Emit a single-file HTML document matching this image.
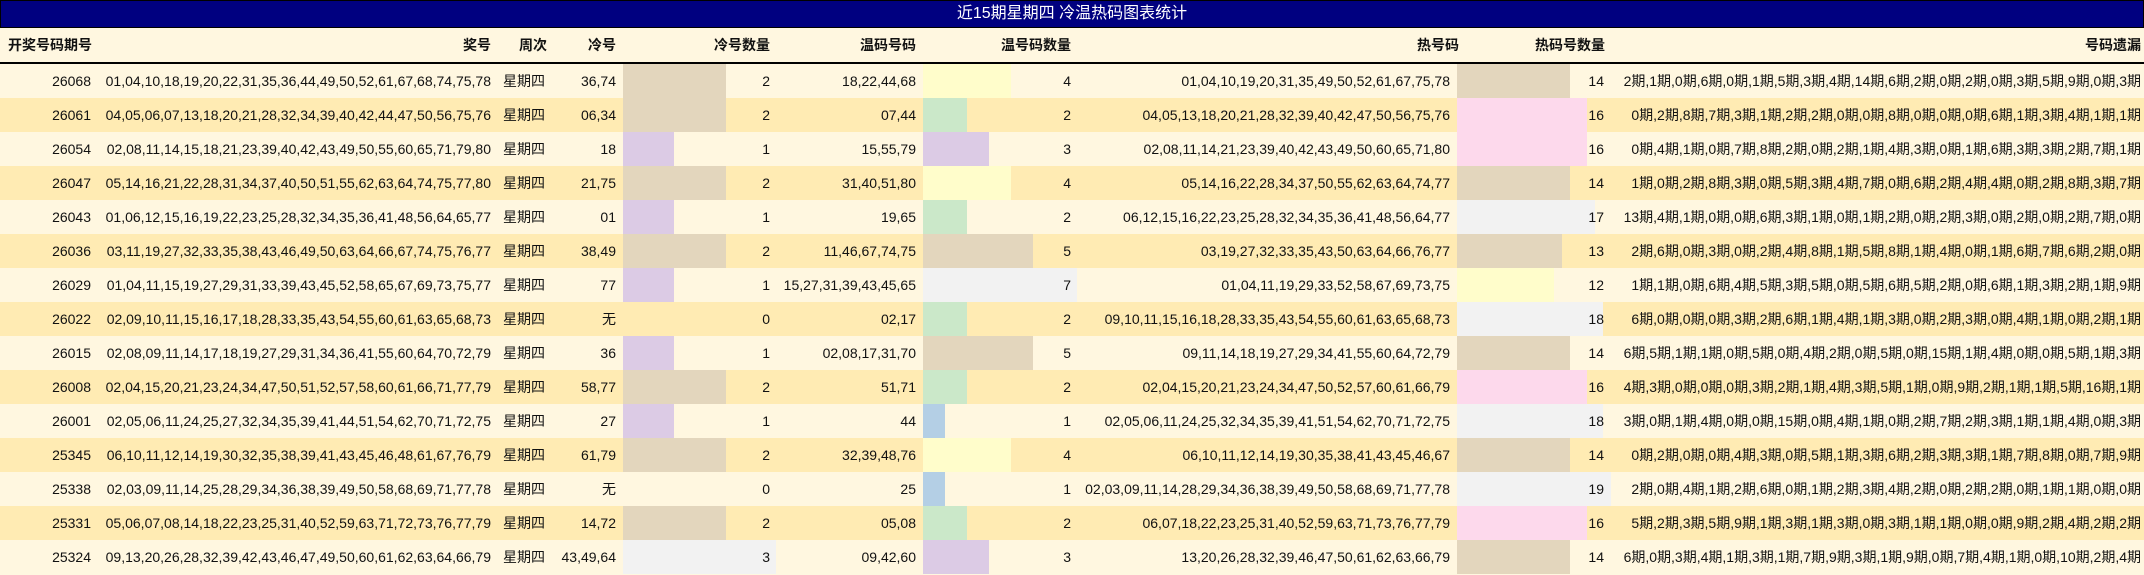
<!DOCTYPE html>
<html><head><meta charset="utf-8"><style>
*{margin:0;padding:0;box-sizing:border-box}
body{width:2144px;height:575px;overflow:hidden;background:#FFF7E0;font-family:"Liberation Sans","Noto Sans CJK SC",sans-serif;font-size:14px;color:#111;position:relative}
#t{position:absolute;left:0;top:0;width:2144px;height:28px;background:#000080;border:1px solid #000;color:#fff;font-size:16px;text-align:center;line-height:26px}
#h{position:absolute;left:0;top:28px;width:2144px;height:36px;background:#FFF7E0;border-bottom:2px solid #000;font-weight:bold}
.r{position:absolute;left:0;width:2144px;height:34px}
.r span,#h span{position:absolute;top:0;line-height:34px;white-space:nowrap}
#h span{line-height:34px}
.r i{position:absolute;top:0;height:34px;display:block}
.o{background:#FFF7E0}.e{background:#FFEBB3}
.T{background:#E3D6BD}.L{background:#DCCBE5}.Y{background:#FFFDCB}.G{background:#CBE8C9}.P{background:#FDD9EC}.S{background:#F2F2F2}.B{background:#B4CFE5}
.a{right:2053px}.b{right:1653px}.c{left:503px}.d{right:1528px}.f{right:1374px}.g{right:1228px}.h{right:1073px}.k{right:694px}.m{right:540px}.n{right:3px}
</style></head><body>
<div id="t">近15期星期四 冷温热码图表统计</div>
<div id="h"><span style="left:8px">开奖号码期号</span><span style="right:1653px">奖号</span><span style="left:519px">周次</span><span style="right:1528px">冷号</span><span style="right:1374px">冷号数量</span><span style="right:1228px">温码号码</span><span style="right:1073px">温号码数量</span><span style="right:685px">热号码</span><span style="right:539px">热码号数量</span><span style="right:3px">号码遗漏</span></div>

<div class="r o" style="top:64px"><i class="T" style="left:623px;width:103px"></i><i class="Y" style="left:923px;width:88px"></i><i class="T" style="left:1457px;width:113px"></i><span class="a">26068</span><span class="b">01,04,10,18,19,20,22,31,35,36,44,49,50,52,61,67,68,74,75,78</span><span class="c">星期四</span><span class="d">36,74</span><span class="f">2</span><span class="g">18,22,44,68</span><span class="h">4</span><span class="k">01,04,10,19,20,31,35,49,50,52,61,67,75,78</span><span class="m">14</span><span class="n">2期,1期,0期,6期,0期,1期,5期,3期,4期,14期,6期,2期,0期,2期,0期,3期,5期,9期,0期,3期</span></div>

<div class="r e" style="top:98px"><i class="T" style="left:623px;width:103px"></i><i class="G" style="left:923px;width:44px"></i><i class="P" style="left:1457px;width:130px"></i><span class="a">26061</span><span class="b">04,05,06,07,13,18,20,21,28,32,34,39,40,42,44,47,50,56,75,76</span><span class="c">星期四</span><span class="d">06,34</span><span class="f">2</span><span class="g">07,44</span><span class="h">2</span><span class="k">04,05,13,18,20,21,28,32,39,40,42,47,50,56,75,76</span><span class="m">16</span><span class="n">0期,2期,8期,7期,3期,1期,2期,2期,0期,0期,8期,0期,0期,0期,6期,1期,3期,4期,1期,1期</span></div>

<div class="r o" style="top:132px"><i class="L" style="left:623px;width:51px"></i><i class="L" style="left:923px;width:66px"></i><i class="P" style="left:1457px;width:130px"></i><span class="a">26054</span><span class="b">02,08,11,14,15,18,21,23,39,40,42,43,49,50,55,60,65,71,79,80</span><span class="c">星期四</span><span class="d">18</span><span class="f">1</span><span class="g">15,55,79</span><span class="h">3</span><span class="k">02,08,11,14,21,23,39,40,42,43,49,50,60,65,71,80</span><span class="m">16</span><span class="n">0期,4期,1期,0期,7期,8期,2期,0期,2期,1期,4期,3期,0期,1期,6期,3期,3期,2期,7期,1期</span></div>

<div class="r e" style="top:166px"><i class="T" style="left:623px;width:103px"></i><i class="Y" style="left:923px;width:88px"></i><i class="T" style="left:1457px;width:113px"></i><span class="a">26047</span><span class="b">05,14,16,21,22,28,31,34,37,40,50,51,55,62,63,64,74,75,77,80</span><span class="c">星期四</span><span class="d">21,75</span><span class="f">2</span><span class="g">31,40,51,80</span><span class="h">4</span><span class="k">05,14,16,22,28,34,37,50,55,62,63,64,74,77</span><span class="m">14</span><span class="n">1期,0期,2期,8期,3期,0期,5期,3期,4期,7期,0期,6期,2期,4期,4期,0期,2期,8期,3期,7期</span></div>

<div class="r o" style="top:200px"><i class="L" style="left:623px;width:51px"></i><i class="G" style="left:923px;width:44px"></i><i class="S" style="left:1457px;width:138px"></i><span class="a">26043</span><span class="b">01,06,12,15,16,19,22,23,25,28,32,34,35,36,41,48,56,64,65,77</span><span class="c">星期四</span><span class="d">01</span><span class="f">1</span><span class="g">19,65</span><span class="h">2</span><span class="k">06,12,15,16,22,23,25,28,32,34,35,36,41,48,56,64,77</span><span class="m">17</span><span class="n">13期,4期,1期,0期,0期,6期,3期,1期,0期,1期,2期,0期,2期,3期,0期,2期,0期,2期,7期,0期</span></div>

<div class="r e" style="top:234px"><i class="T" style="left:623px;width:103px"></i><i class="T" style="left:923px;width:110px"></i><i class="T" style="left:1457px;width:105px"></i><span class="a">26036</span><span class="b">03,11,19,27,32,33,35,38,43,46,49,50,63,64,66,67,74,75,76,77</span><span class="c">星期四</span><span class="d">38,49</span><span class="f">2</span><span class="g">11,46,67,74,75</span><span class="h">5</span><span class="k">03,19,27,32,33,35,43,50,63,64,66,76,77</span><span class="m">13</span><span class="n">2期,6期,0期,3期,0期,2期,4期,8期,1期,5期,8期,1期,4期,0期,1期,6期,7期,6期,2期,0期</span></div>

<div class="r o" style="top:268px"><i class="L" style="left:623px;width:51px"></i><i class="S" style="left:923px;width:154px"></i><i class="Y" style="left:1457px;width:97px"></i><span class="a">26029</span><span class="b">01,04,11,15,19,27,29,31,33,39,43,45,52,58,65,67,69,73,75,77</span><span class="c">星期四</span><span class="d">77</span><span class="f">1</span><span class="g">15,27,31,39,43,45,65</span><span class="h">7</span><span class="k">01,04,11,19,29,33,52,58,67,69,73,75</span><span class="m">12</span><span class="n">1期,1期,0期,6期,4期,5期,3期,5期,0期,5期,6期,5期,2期,0期,6期,1期,3期,2期,1期,9期</span></div>

<div class="r e" style="top:302px"><i class="G" style="left:923px;width:44px"></i><i class="S" style="left:1457px;width:146px"></i><span class="a">26022</span><span class="b">02,09,10,11,15,16,17,18,28,33,35,43,54,55,60,61,63,65,68,73</span><span class="c">星期四</span><span class="d">无</span><span class="f">0</span><span class="g">02,17</span><span class="h">2</span><span class="k">09,10,11,15,16,18,28,33,35,43,54,55,60,61,63,65,68,73</span><span class="m">18</span><span class="n">6期,0期,0期,0期,3期,2期,6期,1期,4期,1期,3期,0期,2期,3期,0期,4期,1期,0期,2期,1期</span></div>

<div class="r o" style="top:336px"><i class="L" style="left:623px;width:51px"></i><i class="T" style="left:923px;width:110px"></i><i class="T" style="left:1457px;width:113px"></i><span class="a">26015</span><span class="b">02,08,09,11,14,17,18,19,27,29,31,34,36,41,55,60,64,70,72,79</span><span class="c">星期四</span><span class="d">36</span><span class="f">1</span><span class="g">02,08,17,31,70</span><span class="h">5</span><span class="k">09,11,14,18,19,27,29,34,41,55,60,64,72,79</span><span class="m">14</span><span class="n">6期,5期,1期,1期,0期,5期,0期,4期,2期,0期,5期,0期,15期,1期,4期,0期,0期,5期,1期,3期</span></div>

<div class="r e" style="top:370px"><i class="T" style="left:623px;width:103px"></i><i class="G" style="left:923px;width:44px"></i><i class="P" style="left:1457px;width:130px"></i><span class="a">26008</span><span class="b">02,04,15,20,21,23,24,34,47,50,51,52,57,58,60,61,66,71,77,79</span><span class="c">星期四</span><span class="d">58,77</span><span class="f">2</span><span class="g">51,71</span><span class="h">2</span><span class="k">02,04,15,20,21,23,24,34,47,50,52,57,60,61,66,79</span><span class="m">16</span><span class="n">4期,3期,0期,0期,0期,3期,2期,1期,4期,3期,5期,1期,0期,9期,2期,1期,1期,5期,16期,1期</span></div>

<div class="r o" style="top:404px"><i class="L" style="left:623px;width:51px"></i><i class="B" style="left:923px;width:22px"></i><i class="S" style="left:1457px;width:146px"></i><span class="a">26001</span><span class="b">02,05,06,11,24,25,27,32,34,35,39,41,44,51,54,62,70,71,72,75</span><span class="c">星期四</span><span class="d">27</span><span class="f">1</span><span class="g">44</span><span class="h">1</span><span class="k">02,05,06,11,24,25,32,34,35,39,41,51,54,62,70,71,72,75</span><span class="m">18</span><span class="n">3期,0期,1期,4期,0期,0期,15期,0期,4期,1期,0期,2期,7期,2期,3期,1期,1期,4期,0期,3期</span></div>

<div class="r e" style="top:438px"><i class="T" style="left:623px;width:103px"></i><i class="Y" style="left:923px;width:88px"></i><i class="T" style="left:1457px;width:113px"></i><span class="a">25345</span><span class="b">06,10,11,12,14,19,30,32,35,38,39,41,43,45,46,48,61,67,76,79</span><span class="c">星期四</span><span class="d">61,79</span><span class="f">2</span><span class="g">32,39,48,76</span><span class="h">4</span><span class="k">06,10,11,12,14,19,30,35,38,41,43,45,46,67</span><span class="m">14</span><span class="n">0期,2期,0期,0期,4期,3期,0期,5期,1期,3期,6期,2期,3期,3期,1期,7期,8期,0期,7期,9期</span></div>

<div class="r o" style="top:472px"><i class="B" style="left:923px;width:22px"></i><i class="S" style="left:1457px;width:154px"></i><span class="a">25338</span><span class="b">02,03,09,11,14,25,28,29,34,36,38,39,49,50,58,68,69,71,77,78</span><span class="c">星期四</span><span class="d">无</span><span class="f">0</span><span class="g">25</span><span class="h">1</span><span class="k">02,03,09,11,14,28,29,34,36,38,39,49,50,58,68,69,71,77,78</span><span class="m">19</span><span class="n">2期,0期,4期,1期,2期,6期,0期,1期,2期,3期,4期,2期,0期,2期,2期,0期,1期,1期,0期,0期</span></div>

<div class="r e" style="top:506px"><i class="T" style="left:623px;width:103px"></i><i class="G" style="left:923px;width:44px"></i><i class="P" style="left:1457px;width:130px"></i><span class="a">25331</span><span class="b">05,06,07,08,14,18,22,23,25,31,40,52,59,63,71,72,73,76,77,79</span><span class="c">星期四</span><span class="d">14,72</span><span class="f">2</span><span class="g">05,08</span><span class="h">2</span><span class="k">06,07,18,22,23,25,31,40,52,59,63,71,73,76,77,79</span><span class="m">16</span><span class="n">5期,2期,3期,5期,9期,1期,3期,1期,3期,0期,3期,1期,1期,0期,0期,9期,2期,4期,2期,2期</span></div>

<div class="r o" style="top:540px"><i class="S" style="left:623px;width:153px"></i><i class="L" style="left:923px;width:66px"></i><i class="T" style="left:1457px;width:113px"></i><span class="a">25324</span><span class="b">09,13,20,26,28,32,39,42,43,46,47,49,50,60,61,62,63,64,66,79</span><span class="c">星期四</span><span class="d">43,49,64</span><span class="f">3</span><span class="g">09,42,60</span><span class="h">3</span><span class="k">13,20,26,28,32,39,46,47,50,61,62,63,66,79</span><span class="m">14</span><span class="n">6期,0期,3期,4期,1期,3期,1期,7期,9期,3期,1期,9期,0期,7期,4期,1期,0期,10期,2期,4期</span></div>
</body></html>
